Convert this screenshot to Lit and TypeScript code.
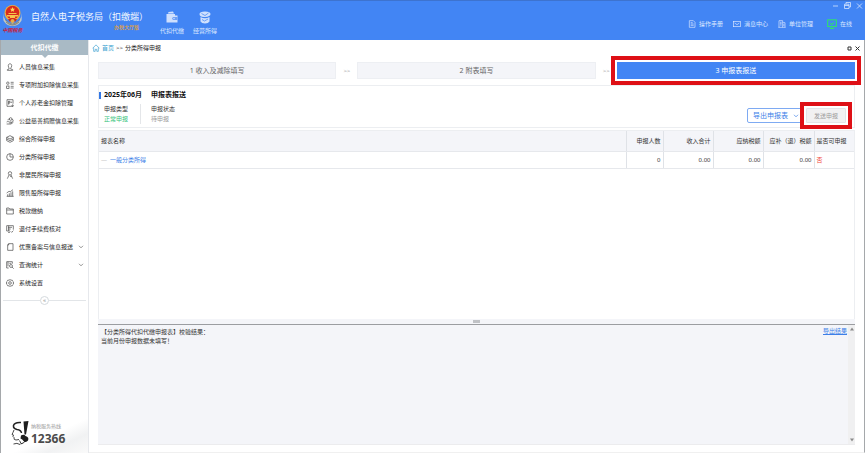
import { LitElement, html, css, svg } from "lit";
import { customElement } from "lit/decorators.js";

const ICONS: Record<string, unknown> = {
  person: svg`<path d="M6 1.2c1.6 0 2.6 1.2 2.6 2.8S7.7 7 7 7.6v1.2l3 1.2v1H2V10l2.6-1V7.600C4 7 3.400 5.600 3.400 4S4.400 1.200 6 1.200z"/>`,
  list: svg`<rect x="1" y="1.500" width="3.500" height="3.500" rx="1.500"/><rect x="1" y="7.500" width="3.500" height="3.500"/><path d="M7 2h4.500M7 4.500h4.500M7 8h4.500M7 10.500h4.500"/>`,
  pension: svg`<path d="M9 11H1.500V1h9v6M4 3.500v5M3 3.500h3v2.500H3M8 4v2M10 8v3.500M8.500 9.500l1.500 2 1.500-2"/>`,
  charity: svg`<circle cx="7" cy="3" r="2"/><path d="M1 7.500c2-1.500 3.500 0 4.500 0h2c1 0 1 1.500 0 1.500H5M8 8l3-1.500M1 10.500h6.500L11 8M3 5c0-2 1-2 2-2M9 3.500c2 0 2 2 1 2.500"/>`,
  layers: svg`<path d="M6 1l5 2.500L6 6 1 3.500zM1 3.500V6l5 2.500L11 6V3.500M1 6v2.500L6 11l5-2.500V6"/>`,
  pie: svg`<circle cx="6" cy="6" r="5"/><path d="M6 1v5h5"/>`,
  foreigner: svg`<circle cx="6" cy="3.500" r="2.500"/><path d="M4.500 6L2 11.500M7.500 6l2.500 5.500M6 8h2.500"/>`,
  chart: svg`<path d="M1 11h10.500M2.500 11V8M5 11V6.500M7.500 11V5M10 11V3.500M1 6l3.500-2.500 2 .5L10.500 1"/>`,
  folder: svg`<path d="M1 10.500v-9h3.500l1 1.500H11v7.500zM1 4.500h10"/>`,
  check: svg`<path d="M11 7V1H1v8h5M3 3.500h6M3 6h4M4 1v8M3 11.500h3M7 9.500l1.500 1.500L11 8.500"/>`,
  page: svg`<path d="M4 1h6.500v10h-8V3zM4 1v2H2.500"/>`,
  query: svg`<path d="M9.500 4V1H1v9.500h3M3 1v7M5 3.500h3"/><circle cx="7.500" cy="7.500" r="2.200"/><path d="M9 9l2.500 2.500"/>`,
  gear: svg`<path d="M6 .8l1.500 1 1.800-.1.800 1.700 1.300 1.100-.6 1.500.6 1.500-1.300 1.100-.8 1.700-1.800-.1-1.500 1-1.500-1-1.800.1-.8-1.700L.6 7.500 1.200 6 .6 4.500l1.300-1.100.8-1.700 1.800.1z"/><circle cx="6" cy="6" r="2"/>`,
  home: svg`<path d="M.8 6.500L6 1.300l5.200 5.200M2.500 5.500V11h2.300V8h2.400v3h2.300V5.500"/>`,
  manual: svg`<path d="M2 1h6l2.500 2.500V11H2zM4 4h3M4 6h4.500M4 8h4.500"/>`,
  mail: svg`<rect x=".8" y="2" width="10.400" height="8"/><path d="M2.500 4.500L6 7l3.500-2.500"/>`,
  building: svg`<path d="M1.500 11V1H7v10M7 4h3.500v7M.5 11h11M3 3.500h2.500M3 5.500h2.500M3 7.500h2.500M8.800 6v3"/>`,
  monitor: svg`<rect x=".8" y="1" width="10.400" height="8"/><path d="M3.500 11.200h5M4 5l1.700 1.700L8.500 4"/>`,
};

const icon = (name: string, cls = "ico") => html`<svg class=${cls} viewBox="0 0 12 12" aria-hidden="true">${ICONS[name]}</svg>`;

const chevron = html`<svg class="chev" viewBox="0 0 6 4" aria-hidden="true"><path d="M1 .8l2 2 2-2"/></svg>`;

const MENU: Array<[string, string, boolean?]> = [
  ["person", "人员信息采集"],
  ["list", "专项附加扣除信息采集"],
  ["pension", "个人养老金扣除管理"],
  ["charity", "公益慈善捐赠信息采集"],
  ["layers", "综合所得申报"],
  ["pie", "分类所得申报"],
  ["foreigner", "非居民所得申报"],
  ["chart", "限售股所得申报"],
  ["folder", "税款缴纳"],
  ["check", "退付手续费核对"],
  ["page", "优惠备案与信息报送", true],
  ["query", "查询统计", true],
  ["gear", "系统设置"],
];

const base = css`
  * { box-sizing: border-box; }
  button, select { font: inherit; color: inherit; background: none; border: 0; padding: 0; margin: 0; }
  a { color: inherit; text-decoration: none; }
  svg { display: block; flex: none; }
  .ico { width: 8px; height: 8px; fill: none; stroke: currentColor; stroke-width: 1; }
  .chev { width: 6px; height: 4px; fill: none; stroke: currentColor; stroke-width: 0.7; }
`;

@customElement("app-header")
export class AppHeader extends LitElement {
  static styles = [base, css`
    :host { display: flex; height: 40px; padding-left: 2px; background: #4285f4; border-top: 1px solid #3d73cf; color: #dce8ff; }
    .logo { display: flex; flex-direction: column; align-items: center; width: 21px; padding-top: 3px; }
    .emblem { width: 21px; height: 23px; }
    .mark { font: italic 700 5px/6px "Noto Sans CJK SC", sans-serif; color: #c8203c; white-space: nowrap; }
    .brand { margin-left: 8px; padding-top: 9px; width: 120px; }
    h1 { margin: 0; font-size: 9px; line-height: 13px; font-weight: 400; color: #f4f8ff; white-space: nowrap; }
    .edition { display: block; margin-right: 12px; text-align: right; font-size: 5px; line-height: 8px; font-weight: 500; color: #e2a13a; }
    .apps { display: flex; gap: 9px; padding: 10px 0 0 9px; }
    .apps button { display: flex; flex-direction: column; align-items: center; gap: 3px; line-height: 8px; }
    .app { width: 12px; height: 13px; fill: #cfe0fd; }
    .right { margin-left: auto; display: flex; flex-direction: column; align-items: flex-end; }
    .win { display: flex; align-items: center; gap: 5px; height: 8px; padding-right: 2px; }
    .win svg { width: 7px; height: 7px; fill: none; stroke: #d5e4ff; stroke-width: 0.8; }
    .links { display: flex; gap: 10px; margin-top: 10px; padding-right: 13px; line-height: 10px; }
    .links a { display: flex; align-items: center; gap: 3px; }
    .links .state { margin-left: 4px; }
    .state .ico { width: 10px; height: 10px; stroke: #2fe070; stroke-width: 1.300; }
  `];
  render() {
    return html`
      <div class="logo">
        <svg class="emblem" viewBox="0 0 42 46" aria-hidden="true">
          <path d="M2 18Q4 34 12 36Q3 37 3 32ZM40 18Q38 34 30 36Q39 37 39 32Z" fill="#c9d0cf"/>
          <path d="M4 26q2 12 17 12t17-12l-1 10q-5 8-16 8T5 36z" fill="#bfc4bd"/>
          <path d="M6 31q7 9 15 9t15-9M8 36q6 6 13 6t13-6" fill="none" stroke="#6d6b62" stroke-width="1.400"/>
          <circle cx="21" cy="18" r="16" fill="#e8ae45"/>
          <circle cx="21" cy="17" r="13.500" fill="#d92a1c"/>
          <path d="M21 6l1.500 3.400 3.700.3-2.800 2.400.9 3.600-3.300-1.900-3.300 1.900.9-3.600-2.800-2.400 3.700-.3z" fill="#ffd95a"/>
          <path d="M10 22h22v3H10zM14 18h14l2 2H12zM16 25h10v3H16z" fill="#f6c64b"/>
          <path d="M12 30h18l-3 5H15z" fill="#c8291d"/><circle cx="21" cy="34" r="4" fill="#e8ae45"/>
        </svg>
        <span class="mark">中国税务</span>
      </div>
      <div class="brand"><h1>自然人电子税务局（扣缴端）</h1><span class="edition">办税大厅版</span></div>
      <nav class="apps">
        <button><svg class="app" viewBox="0 0 24 26" aria-hidden="true"><path d="M1 6h17v3h5v14H1zM5 2l9-1 2 4H4z"/><path d="M14 12h9v6h-9l-2-3z" fill="#6d9ff6"/><circle cx="16" cy="15" r="1.500"/></svg>代扣代缴</button>
        <button><svg class="app" viewBox="0 0 24 26" aria-hidden="true"><path d="M1 6q0-5 11-5t11 5-11 6T1 6zM3 12q9 5 18 0v9q-2 4-9 4t-9-4z"/><path d="M5 5l7 4 7-5M6 17l5 3 7-4" fill="none" stroke="#5f96f5" stroke-width="1.800"/></svg>经营所得</button>
      </nav>
      <div class="right">
        <div class="win">
          <button aria-label="最小化"><svg viewBox="0 0 7 7"><path d="M1 4h5"/></svg></button>
          <button aria-label="还原"><svg viewBox="0 0 7 7"><path d="M2 2V.5h4.500V5H5M.5 2.200H5v4.300H.5zM.5 3.500H5"/></svg></button>
          <button aria-label="关闭"><svg viewBox="0 0 7 7"><path d="M1 1.500l5 5M6 1.500l-5 5"/></svg></button>
        </div>
        <nav class="links">
          <a href="#manual">${icon("manual")}操作手册</a>
          <a href="#message">${icon("mail")}消息中心</a>
          <a href="#unit">${icon("building")}单位管理</a>
          <a href="#online" class="state">${icon("monitor")}在线</a>
        </nav>
      </div>`;
  }
}

@customElement("app-sidebar")
export class AppSidebar extends LitElement {
  static styles = [base, css`
    :host { display: flex; flex-direction: column; flex: none; width: 89px; background: #fff; border-left: 1px solid #a5a8ab; border-right: 1px solid #e6e8ec; }
    h2 { position: relative; margin: 0; height: 15px; font-size: 7px; line-height: 15px; font-weight: 700; text-align: center; color: #fff; background: #a9bac5; }
    h2::after { content: ""; position: absolute; left: calc(50% - 3px); top: 100%; border: 3px solid transparent; border-top-color: #a9bac5; border-bottom-width: 0; }
    ul { list-style: none; margin: 0; padding: 3px 0 0; }
    a { display: flex; align-items: center; gap: 5px; height: 18px; padding: 0 4px 0 5px; white-space: nowrap; color: #262626; }
    a .ico { color: #444; }
    a .chev { margin-left: auto; color: #666; }
    .fold { display: flex; align-items: center; height: 10px; margin: 3px 2px 0; }
    .fold::before, .fold::after { content: ""; flex: 1; height: 1px; background: #e2e5e8; }
    .fold button { width: 9px; height: 9px; border: 1px solid #d5dade; border-radius: 50%; font-size: 6px; line-height: 6px; color: #888; }
    .hot { display: flex; align-items: center; gap: 1px; margin-top: auto; padding: 6px 0 7px 10px; background: linear-gradient(155deg, #fff 55%, #f1f2f3 75%, #fafafa); }
    .face { width: 19px; height: 25px; }
    .hot p { margin: 0; font-size: 5px; line-height: 8px; color: #999; }
    .hot strong { display: block; margin-top: 1px; font-size: 12px; line-height: 15px; color: #4b4b4b; }
  `];
  render() {
    return html`
      <h2>代扣代缴</h2>
      <ul>${MENU.map(([i, t, more]) => html`<li><a href="#${i}">${icon(i)}${t}${more ? chevron : ""}</a></li>`)}</ul>
      <div class="fold"><button aria-label="收起菜单">«</button></div>
      <div class="hot">
        <svg class="face" viewBox="0 0 38 50" aria-hidden="true">
          <path d="M20 3Q7 2 5 9q-1 6 7 8 8 1 9 7" fill="none" stroke="#222" stroke-width="3"/>
          <path d="M6 18Q4 23 2 27l3 1-1 3 2 2q-1 5 4 5l6-1M17 39l3 6M5 46q7-3 13 1" fill="none" stroke="#333" stroke-width="1.800"/>
          <path d="M25 1l10-1-5 27h-3zM20 29q6-3 9 1 8 2 5 9-4 5-9 1-2-4-6-5z" fill="#1e1e1e"/>
          <path d="M29 39q-3 6-10 7" fill="none" stroke="#222" stroke-width="2"/>
        </svg>
        <div><p>纳税服务热线</p><strong>12366</strong></div>
      </div>`;
  }
}

@customElement("app-root")
export class AppRoot extends LitElement {
  static styles = [base, css`
    :host { display: flex; flex-direction: column; min-height: 100vh; font: 6px/10px "Noto Sans", "Noto Sans CJK SC", sans-serif; color: #333; background: #fff; }
    .body { display: flex; flex: 1; }
    main { flex: 1; min-width: 0; display: flex; flex-direction: column; padding: 0 9px 7px 8px; border-right: 1px solid #a5a8ab; border-bottom: 1px solid #f0f0f0; }
    .crumbs { display: flex; align-items: center; height: 16px; gap: 2px; margin: 0 -5px; color: #222; }
    .crumbs .ico, .crumbs a { color: #3a9fd0; }
    .tabs { display: flex; gap: 3px; margin-left: auto; }
    .tabs svg { width: 5px; height: 5px; fill: none; stroke: #333; stroke-width: 1; }
    .steps { display: flex; align-items: center; padding: 6px 0; gap: 7px; margin: 0 0 0 1px; }
    .step { position: relative; flex: 1; height: 17px; font-size: 7px; background: #f4f5f9; border: 1px solid #edeff3; color: #666; }
    .step.on { background: #4285f4; border-color: #4285f4; color: #fff; }
    .arrow { width: 7px; text-align: center; color: #999; }
    .mark { position: absolute; z-index: 2; inset: -7px; border: 4px solid #de1016; pointer-events: none; }
    .info { display: flex; justify-content: space-between; margin: 0 0 2px 1px; height: 43px; padding: 4px 2px 0 0; border: 1px solid #eceef1; }
    h3 { display: flex; align-items: center; margin: 0; font-size: 7px; line-height: 10px; color: #111; white-space: nowrap; }
    h3::before { content: ""; width: 2px; height: 7px; margin-right: 3px; background: #3478e5; }
    h3 span { width: 47px; }
    dl { display: flex; gap: 10px; margin: 4px 0 0 5px; }
    dl div { width: 36px; height: 20px; }
    dl div:first-child { width: 37px; border-right: 1px solid #e4e6e9; }
    dt, dd { margin: 0; }
    .ok { color: #35c27b; }
    .wait { color: #999; }
    .actions { display: flex; align-items: flex-start; gap: 3px; padding-top: 18px; margin-right: 6px; }
    .drop { position: relative; display: flex; }
    .drop select { appearance: none; width: 56px; height: 15px; padding-left: 5px; font-size: 7px; line-height: 10px; color: #3d7fe8; border: 1px solid #7eaaf2; border-radius: 2px; background: #fff; }
    .drop .chev { position: absolute; right: 4px; top: 6px; color: #3d7fe8; }
    .send { position: relative; width: 40px; height: 15px; color: #9c9c9c; background: #f1f1f2; border: 1px solid #e3e4e7; border-radius: 1px; }
    .grid { flex: 1; margin-left: 1px; border: 1px solid #eceef1; border-bottom: 0; }
    table { width: 100%; table-layout: fixed; border-collapse: collapse; }
    th, td { padding: 0 2px; text-align: right; white-space: nowrap; font-weight: 400; border-right: 1px solid #dfe2e7; }
    th { height: 20px; background: #f4f5f9; border-bottom: 1px solid #e6e8ec; }
    td { height: 17px; border-bottom: 1px solid #e6e8ec; }
    .l { text-align: left; }
    th:last-child, td:last-child { border-right: 0; text-align: left; }
    .w1 { width: 37px; } .w2 { width: 50px; } .w3 { width: 51px; } .w4 { width: 40px; }
    td a { color: #3d7fe8; }
    .dash { color: #bbb; margin-right: 3px; }
    .no { color: #f04a3e; }
    .split { display: flex; align-items: center; justify-content: center; height: 6px; margin-left: 1px; background: #f4f5f9; border-bottom: 1px solid #9b9da1; }
    .split i { width: 7px; height: 3px; background: #c0c2c6; }
    .result { display: flex; height: 120px; margin-left: 1px; background: #f4f5f9; border-bottom: 1px solid #ececee; }
    .result p { flex: 1; margin: 3px 0 0 3px; line-height: 9px; }
    .result a { margin-top: 1px; color: #3d7fe8; text-decoration: underline; }
    .bar { display: flex; flex-direction: column; justify-content: space-between; align-items: center; width: 7px; margin-left: 1px; padding: 2px 0; background: #f0f0f1; }
    .bar svg { width: 4px; height: 4px; fill: #8a8a8a; }
  `];
  render() {
    return html`
      <app-header></app-header>
      <div class="body">
        <app-sidebar></app-sidebar>
        <main>
          <nav class="crumbs">
            ${icon("home")}<a href="#home">首页</a><span>&gt;&gt;</span><span>分类所得申报</span>
            <div class="tabs">
              <button aria-label="还原标签"><svg viewBox="0 0 5 5"><path d="M1 1h3v3H1z"/></svg></button>
              <button aria-label="关闭标签"><svg viewBox="0 0 5 5"><path d="M.5 .5l4 4M4.500 .5l-4 4"/></svg></button>
            </div>
          </nav>
          <div class="steps">
            <button class="step">1 收入及减除填写</button><span class="arrow">&gt;&gt;</span>
            <button class="step">2 附表填写</button><span class="arrow">&gt;&gt;</span>
            <button class="step on">3 申报表报送<span class="mark"></span></button>
          </div>
          <section class="info">
            <div>
              <h3><span>2025年06月</span>申报表报送</h3>
              <dl>
                <div><dt>申报类型</dt><dd class="ok">正常申报</dd></div>
                <div><dt>申报状态</dt><dd class="wait">待申报</dd></div>
              </dl>
            </div>
            <div class="actions">
              <label class="drop"><select aria-label="导出申报表"><option>导出申报表</option></select>${chevron}</label>
              <button class="send">发送申报<span class="mark"></span></button>
            </div>
          </section>
          <div class="grid">
            <table>
              <colgroup><col><col class="w1"><col class="w2"><col class="w2"><col class="w3"><col class="w4"></colgroup>
              <thead><tr><th class="l">报表名称</th><th>申报人数</th><th>收入合计</th><th>应纳税额</th><th>应补（退）税额</th><th>是否可申报</th></tr></thead>
              <tbody><tr><td class="l"><span class="dash">—</span><a href="#report">一般分类所得</a></td><td>0</td><td>0.00</td><td>0.00</td><td>0.00</td><td class="no">否</td></tr></tbody>
            </table>
          </div>
          <div class="split"><i></i></div>
          <section class="result">
            <p>【分类所得代扣代缴申报表】校验结果：<br>当前月份申报数据未填写！</p>
            <a href="#export">导出结果</a>
            <div class="bar">
              <svg viewBox="0 0 4 4" aria-hidden="true"><path d="M0 3.500L2 .5l2 3z"/></svg>
              <svg viewBox="0 0 4 4" aria-hidden="true"><path d="M0 .5h4l-2 3z"/></svg>
            </div>
          </section>
        </main>
      </div>`;
  }
}
